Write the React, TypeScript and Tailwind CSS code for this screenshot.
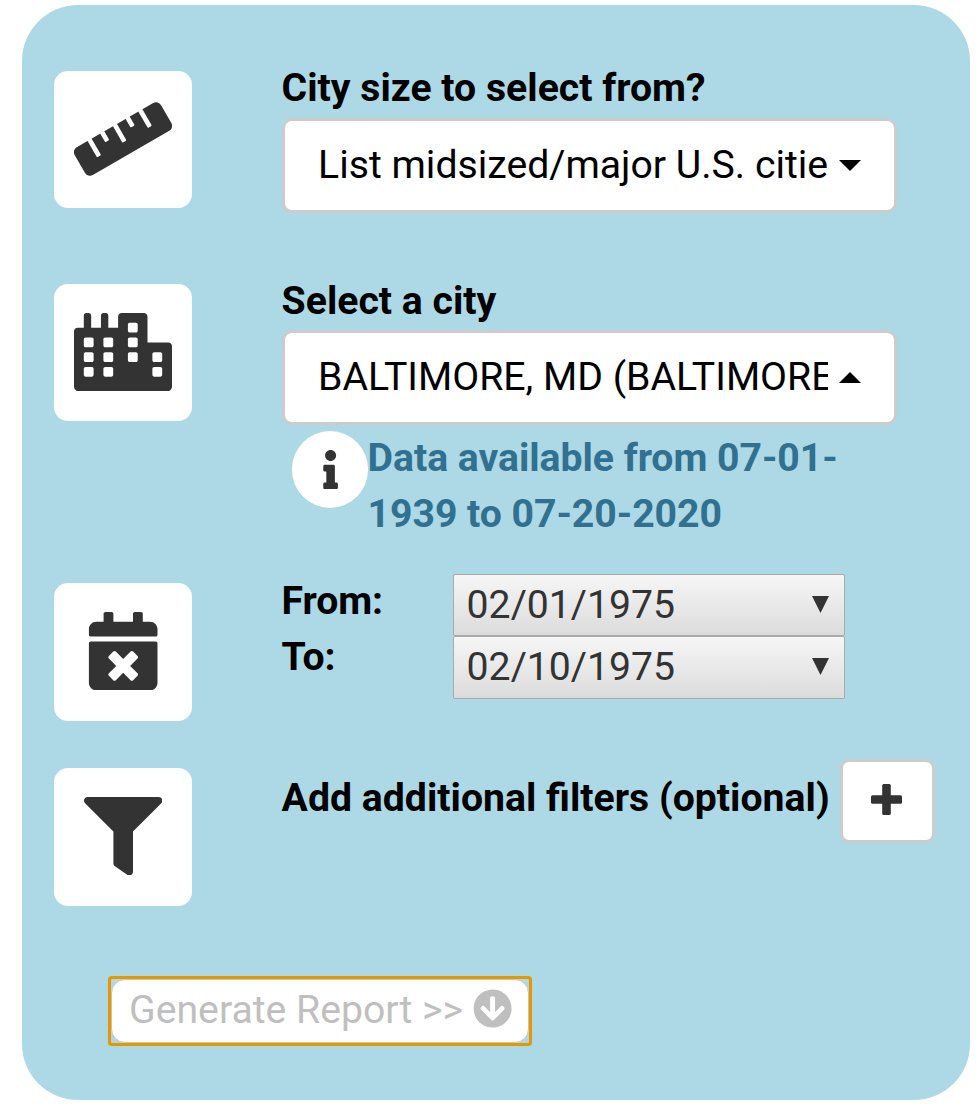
import type { ReactNode } from 'react';
import {
  FaArrowCircleDown,
  FaCalendarTimes,
  FaCity,
  FaFilter,
  FaInfo,
} from 'react-icons/fa';

function Tile({ children }: { children: ReactNode }) {
  return (
    <div className="flex h-[137.6px] w-[137.6px] shrink-0 items-center justify-center rounded-[14px] bg-white text-[78.4px] text-[#333]">
      {children}
    </div>
  );
}

function RulerIcon() {
  return (
    <svg viewBox="0 0 294 222" className="h-[74px] w-[98px]">
      <g transform="translate(147 111) rotate(-30)">
        <rect x="-149.500" y="-48.300" width="299" height="96.600" rx="17" fill="#333" />
        <g fill="#fff">
          <rect x="-95" y="-54" width="14" height="63" rx="3.500" />
          <rect x="-51" y="-54" width="14" height="36" rx="3.500" />
          <rect x="-7" y="-54" width="14" height="63" rx="3.500" />
          <rect x="37" y="-54" width="14" height="36" rx="3.500" />
          <rect x="81" y="-54" width="14" height="63" rx="3.500" />
        </g>
      </g>
    </svg>
  );
}

function PlusIcon() {
  return (
    <svg viewBox="0 0 31 31" className="h-[31px] w-[31px]" fill="#333">
      <rect x="11.200" y="0" width="8.600" height="31" rx="1.500" />
      <rect x="0" y="11.200" width="31" height="8.600" rx="1.500" />
    </svg>
  );
}

function SelectBox({ value, open = false }: { value: string; open?: boolean }) {
  return (
    <button
      type="button"
      className="flex h-[95px] w-[615px] items-center rounded-[10px] border-3 border-[#ccc] bg-white pl-[33.5px] text-left"
    >
      <span className="block w-[510px] overflow-hidden whitespace-nowrap pb-px">{value}</span>
      <svg viewBox="0 0 22 11" className="ml-[10.5px] h-[11px] w-[22px] shrink-0" fill="#000">
        {open ? <path d="M0 11 11 0l11 11z" /> : <path d="M0 0h22L11 11z" />}
      </svg>
    </button>
  );
}

function DateButton({ value }: { value: string }) {
  return (
    <button
      type="button"
      className="flex h-[62.7px] w-[392px] items-center justify-between rounded-[2px] border border-[#aaa] bg-linear-to-b from-[#f6f6f6] to-[#dcdcdc] pr-[15px] pl-[13px] text-[#333]"
    >
      <span className="pb-[0.700px]">{value}</span>
      <svg viewBox="0 0 17 17" className="mb-[1.5px] h-[17px] w-[17px]" fill="#333">
        <path d="M0 0h17L8.500 17z" />
      </svg>
    </button>
  );
}

export default function App() {
  return (
    <div className="h-[1115px] w-[978px] overflow-hidden bg-white pt-[5px] pl-[22px] font-['Roboto',sans-serif] text-[39.2px] leading-[56px] text-black">
      <main className="flex h-[1095px] w-[948px] flex-col rounded-[56px] bg-[#add8e6] pt-[55px] pl-[32px]">
        <section className="flex h-[213px]">
          <div className="pt-[10.5px]">
            <Tile>
              <RulerIcon />
            </Tile>
          </div>
          <div className="ml-[90px]">
            <label className="mb-[1.5px] block font-bold">City size to select from?</label>
            <SelectBox value="List midsized/major U.S. citie" />
          </div>
        </section>

        <section className="flex h-[299px]">
          <div className="pt-[10.5px]">
            <Tile>
              <FaCity className="mb-px h-[78.4px] w-[98px]" />
            </Tile>
          </div>
          <div className="ml-[90px]">
            <label className="mb-[1.4px] block font-bold">Select a city</label>
            <SelectBox value="BALTIMORE, MD (BALTIMORE)" open />
            <div className="mt-[4px] flex pl-[10px]">
              <span className="mt-[2px] flex h-[76.5px] w-[76.5px] shrink-0 items-center justify-center rounded-full bg-white pl-px text-[39.2px] text-[#333]">
                <FaInfo />
              </span>
              <p className="-ml-[0.500px] w-[500px] pt-[0.500px] font-bold tracking-[-0.040px] text-[#31708f]">
                Data available from 07-01-
                <br />
                1939 to 07-20-2020
              </p>
            </div>
          </div>
        </section>

        <section className="flex h-[187px]">
          <div className="pt-[11px]">
            <Tile>
              <FaCalendarTimes className="mb-px" />
            </Tile>
          </div>
          <div className="ml-[90px] w-[171px] pt-px font-bold tracking-[-0.100px]">
            <div>From:</div>
            <div>To:</div>
          </div>
          <div className="flex flex-col pt-[1.5px]">
            <DateButton value="02/01/1975" />
            <DateButton value="02/10/1975" />
          </div>
        </section>

        <section className="flex h-[216.5px]">
          <div className="pt-[9px]">
            <Tile>
              <FaFilter className="mb-px" />
            </Tile>
          </div>
          <div className="ml-[90px] w-[559px] pt-[11px] font-bold whitespace-nowrap">
            Add additional filters (optional)
          </div>
          <button
            type="button"
            className="-mt-[0.500px] -ml-[0.500px] flex h-[84px] w-[94.5px] items-center justify-center rounded-[9px] border-3 border-[#ccc] bg-white pr-[2px] pb-[2px]"
          >
            <PlusIcon />
          </button>
        </section>

        <div className="ml-[54px] h-[70px] w-[424px] rounded-[4px] border-3 border-[#e59700]">
          <button
            type="button"
            disabled
            className="flex h-full w-full items-center rounded-[14px] border border-[#c4c4c4] bg-white pl-[17px] text-[#bfbfbf]"
          >
            <span className="pb-[2px] whitespace-nowrap">Generate Report &gt;&gt;</span>
            <FaArrowCircleDown className="mb-[4px] ml-[9.5px]" />
          </button>
        </div>
      </main>
    </div>
  );
}
